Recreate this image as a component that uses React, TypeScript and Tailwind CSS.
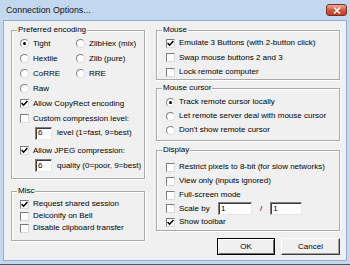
import React from 'react';

type Kids = { children?: React.ReactNode };

function Check({ on }: { on?: boolean }) {
  return (
    <span className="flex h-[9px] w-[9px] shrink-0 items-center justify-center border border-[#7b7b7b] border-b-[#dadada] border-r-[#dadada] bg-white">
      {on && (
        <svg width="7" height="7" viewBox="0 0 7 7">
          <path d="M0.6 3.1 L2.6 5.2 L6.4 1.1" stroke="#000" strokeWidth="1.5" fill="none" />
        </svg>
      )}
    </span>
  );
}

function Radio({ on }: { on?: boolean }) {
  return (
    <span className="flex h-[9px] w-[9px] shrink-0 items-center justify-center rounded-full border border-[#828282] border-b-[#dcdcdc] border-r-[#dcdcdc] bg-white">
      {on && <span className="h-[3px] w-[3px] rounded-full bg-black" />}
    </span>
  );
}

function Field({ value, w }: { value: string; w: string }) {
  return (
    <div className={`flex h-[13px] items-center border border-[#7f7f7f] border-b-[#e6e6e6] border-r-[#e6e6e6] bg-white pl-[2px] shadow-[inset_1px_1px_0_#3c3c3c] ${w}`}>
      {value}
    </div>
  );
}

function Group({ label, className, children }: Kids & { label: string; className: string }) {
  return (
    <div className={`relative border border-[#a9a9a9] shadow-[inset_1px_1px_0_#fff,1px_1px_0_#fff] ${className}`}>
      <span className="absolute left-[5px] top-[-6px] bg-[#f0f0f0] px-[1px] leading-[10px]">{label}</span>
      {children}
    </div>
  );
}

function Opt({ h, radio, on, text }: { h: string; radio?: boolean; on?: boolean; text: string }) {
  return (
    <div className={`flex items-center gap-[4px] ${h}`}>
      {radio ? <Radio on={on} /> : <Check on={on} />}
      <span className="whitespace-nowrap">{text}</span>
    </div>
  );
}

export default function App() {
  return (
    <div className="flex h-[265px] w-[350px] flex-col border-b border-b-[#2b6477] bg-[#c3d7ee] pb-[3px] font-['Liberation_Sans',Arial,sans-serif] text-[8px] leading-none text-black">
      <div className="flex h-[20px] items-center justify-between pl-[6px] pr-[3px]">
        <span className="text-[8.8px] text-[#111]">Connection Options...</span>
        <div className="flex h-[12px] w-[21px] items-center justify-center rounded-[3px] border border-[#7a2e1f] bg-gradient-to-b from-[#eba999] via-[#d5583c] to-[#c13a1e]">
          <svg width="8" height="7" viewBox="0 0 8 7">
            <path d="M1 0.5 L7 6.5 M7 0.5 L1 6.5" stroke="#fff" strokeWidth="1.6" />
          </svg>
        </div>
      </div>

      <div className="mx-[3px] flex flex-1 gap-[11px] border border-[#93acc9] bg-[#f0f0f0] pl-[7px] pr-[6px] pt-[9px]">
        {/* left column */}
        <div className="flex w-[134px] flex-col">
          <Group label="Preferred encoding" className="h-[149px] pl-[8px] pt-[5px]">
            <div className="grid grid-cols-[56px_1fr]">
              <Opt h="h-[15px]" radio on text="Tight" />
              <Opt h="h-[15px]" radio text="ZlibHex (mix)" />
              <Opt h="h-[15px]" radio text="Hextile" />
              <Opt h="h-[15px]" radio text="Zlib (pure)" />
              <Opt h="h-[15px]" radio text="CoRRE" />
              <Opt h="h-[15px]" radio text="RRE" />
              <Opt h="h-[15px]" radio text="Raw" />
            </div>
            <Opt h="h-[15px]" on text="Allow CopyRect encoding" />
            <Opt h="h-[15px]" text="Custom compression level:" />
            <div className="ml-[15px] flex h-[14px] items-center gap-[5px]">
              <Field value="6" w="w-[17px]" />
              <span>level (1=fast, 9=best)</span>
            </div>
            <div className="mt-[3px]">
              <Opt h="h-[15px]" on text="Allow JPEG compression:" />
            </div>
            <div className="ml-[15px] flex h-[15px] items-center gap-[5px]">
              <Field value="6" w="w-[17px]" />
              <span>quality (0=poor, 9=best)</span>
            </div>
          </Group>

          <Group label="Misc" className="mt-[12px] h-[50px] pl-[8px] pt-[6px]">
            <Opt h="h-[12px]" on text="Request shared session" />
            <Opt h="h-[12px]" text="Deiconify on Bell" />
            <Opt h="h-[12px]" text="Disable clipboard transfer" />
          </Group>
        </div>

        {/* right column */}
        <div className="flex w-[184px] flex-col">
          <Group label="Mouse" className="h-[50px] pl-[9px] pt-[5px]">
            <Opt h="h-[14.5px]" on text="Emulate 3 Buttons (with 2-button click)" />
            <Opt h="h-[14.5px]" text="Swap mouse buttons 2 and 3" />
            <Opt h="h-[14.5px]" text="Lock remote computer" />
          </Group>

          <Group label="Mouse cursor" className="mt-[8px] h-[53px] pl-[9px] pt-[6px]">
            <Opt h="h-[14px]" radio on text="Track remote cursor locally" />
            <Opt h="h-[14px]" radio text="Let remote server deal with mouse cursor" />
            <Opt h="h-[14px]" radio text="Don't show remote cursor" />
          </Group>

          <Group label="Display" className="mt-[9px] h-[81px] pl-[9px] pt-[9px]">
            <Opt h="h-[14px]" text="Restrict pixels to 8-bit (for slow networks)" />
            <Opt h="h-[14px]" text="View only (inputs ignored)" />
            <Opt h="h-[14px]" text="Full-screen mode" />
            <div className="flex h-[13px] items-center gap-[4px]">
              <Check />
              <span className="w-[35px]">Scale by</span>
              <Field value="1" w="w-[34px]" />
              <span className="px-[4px]">/</span>
              <Field value="1" w="w-[32px]" />
            </div>
            <Opt h="h-[14px]" on text="Show toolbar" />
          </Group>

          <div className="mt-[7px] flex justify-end gap-[6px]">
            <div className="flex h-[17px] w-[58px] items-center justify-center border border-black bg-[#f0f0f0] shadow-[inset_1px_1px_0_#fff,inset_-1px_-1px_0_#6e6e6e]">
              OK
            </div>
            <div className="flex h-[17px] w-[59px] items-center justify-center border border-white border-b-[#3c3c3c] border-r-[#3c3c3c] bg-[#f0f0f0] shadow-[inset_-1px_-1px_0_#a0a0a0]">
              Cancel
            </div>
          </div>
        </div>
      </div>
    </div>
  );
}
